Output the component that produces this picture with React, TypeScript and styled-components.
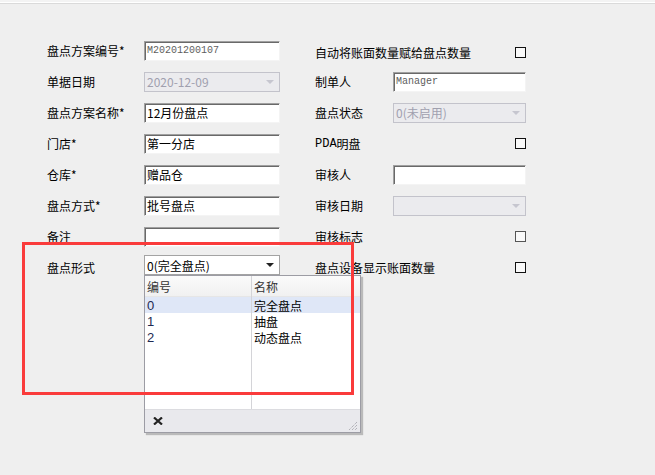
import styled, { createGlobalStyle } from "styled-components";

const GlobalStyle = createGlobalStyle`
  html, body {
    margin: 0;
    padding: 0;
    background: #efefef;
    height: 475px;
    overflow: hidden;
  }
  body {
    font-family: "Noto Sans CJK SC", "DejaVu Sans", sans-serif;
    font-size: 12px;
    color: #000;
  }
`;

const Page = styled.div`
  position: relative;
  width: 655px;
  height: 475px;
  border-top: 2px solid #f3f3f3;
  box-sizing: border-box;
`;

const TopEdge = styled.div`
  height: 1px;
  background: #fff;
  border-bottom: 1px solid #dadada;
`;

const Form = styled.div`
  display: flex;
  gap: 35px;
  padding: 31px 0 0 47px;
`;

const Column = styled.div<{ $label: number; $field: number }>`
  display: grid;
  grid-template-columns: ${(p) => p.$label}px ${(p) => p.$field}px;
  grid-auto-rows: 31px;
`;

const Label = styled.div`
  display: flex;
  align-items: center;
  white-space: nowrap;
  line-height: 1;
`;

const Wide = styled.div`
  grid-column: 1 / span 2;
  display: flex;
  align-items: center;
  justify-content: space-between;
  white-space: nowrap;
  padding-top: 3px;
`;

const Field = styled.div<{ $end?: boolean; $top?: boolean }>`
  position: relative;
  display: flex;
  align-items: ${(p) => (p.$top ? "flex-start" : "center")};
  padding-top: ${(p) => (p.$top ? "3px" : "0")};
  justify-content: ${(p) => (p.$end ? "flex-end" : "stretch")};
`;

const TextInput = styled.div<{ $mono?: boolean }>`
  flex: 1;
  height: 20px;
  box-sizing: border-box;
  background: #fff;
  border: 1px solid;
  border-color: #a0a0a0 #f4f4f4 #f4f4f4 #a0a0a0;
  box-shadow: inset 1px 1px 0 #696969;
  padding-left: 2px;
  display: flex;
  align-items: center;
  white-space: nowrap;
  font-family: ${(p) =>
    p.$mono ? '"Liberation Mono", monospace' : '"Noto Sans CJK SC", sans-serif'};
  font-size: ${(p) => (p.$mono ? "10px" : "12px")};
  color: ${(p) => (p.$mono ? "#5e5e5e" : "#000")};
`;

const Select = styled.div<{ $disabled?: boolean }>`
  flex: 1;
  height: 20px;
  box-sizing: border-box;
  border: 1px solid ${(p) => (p.$disabled ? "#c3c3cb" : "#a3a3a3")};
  background: ${(p) => (p.$disabled ? "#ebebee" : "#fff")};
  color: ${(p) => (p.$disabled ? "#a0a0ae" : "#000")};
  display: flex;
  align-items: center;
  justify-content: space-between;
  padding: 0 5px 0 2px;
  font-size: 12px;
  white-space: nowrap;
`;

const Arrow = styled.span<{ $disabled?: boolean }>`
  width: 0;
  height: 0;
  border-left: 4px solid transparent;
  border-right: 4px solid transparent;
  border-top: 4px solid ${(p) => (p.$disabled ? "#c6c6cf" : "#222")};
`;

const Check = styled.span<{ $light?: boolean }>`
  width: 11px;
  height: 11px;
  box-sizing: border-box;
  border: 1px solid ${(p) => (p.$light ? "#555" : "#111")};
  background: #f9f9f9;
`;

const Popup = styled.div`
  position: absolute;
  left: 0;
  top: 23px;
  width: 217px;
  height: 158px;
  box-sizing: border-box;
  background: #fff;
  border: 1px solid #9c9ca4;
  box-shadow: 2px 2px 1px rgba(0, 0, 0, 0.22);
  display: flex;
  flex-direction: column;
  z-index: 2;
`;

const ListBody = styled.div`
  flex: 1;
  display: grid;
  grid-template-columns: 107px 1fr;
`;

const ListColumn = styled.div<{ $divider?: boolean }>`
  display: flex;
  flex-direction: column;
  border-right: ${(p) => (p.$divider ? "1px solid #d4d4d8" : "none")};
`;

const HeaderCell = styled.div`
  height: 20px;
  border-bottom: 1px solid #e6e6e6;
  background: linear-gradient(#fbfbfb, #f1f1f1);
  display: flex;
  align-items: center;
  padding-left: 2px;
  color: #333;
`;

const Cell = styled.div<{ $selected?: boolean; $code?: boolean }>`
  height: 16px;
  display: flex;
  align-items: center;
  padding-left: 2px;
  background: ${(p) => (p.$selected ? "#dfe7f7" : "transparent")};
  color: ${(p) => (p.$code ? "#1e2a52" : "#000")};
  font-family: ${(p) =>
    p.$code ? '"Liberation Sans", sans-serif' : '"Noto Sans CJK SC", sans-serif'};
  font-size: ${(p) => (p.$code ? "13px" : "12px")};
`;

const Footer = styled.div`
  height: 22px;
  background: #e9e9ed;
  border-top: 1px solid #dcdce0;
  display: flex;
  align-items: center;
  justify-content: space-between;
  padding: 0 2px 0 8px;
`;

const Grip = styled.svg`
  align-self: flex-end;
  margin-bottom: 1px;
`;

const Annotation = styled.div`
  position: absolute;
  left: 22px;
  top: 240px;
  width: 332px;
  height: 153px;
  box-sizing: border-box;
  border: 3px solid #fa3b3b;
  z-index: 3;
  pointer-events: none;
`;

const Mono = styled.span`
  font-family: "Liberation Mono", monospace;
  font-size: 12px;
`;

const options = [
  { code: "0", name: "完全盘点" },
  { code: "1", name: "抽盘" },
  { code: "2", name: "动态盘点" },
];

export default function App() {
  return (
    <>
      <GlobalStyle />
      <Page>
        <TopEdge />
        <Form>
          <Column $label={97} $field={136}>
            <Label>盘点方案编号*</Label>
            <Field>
              <TextInput $mono>M20201200107</TextInput>
            </Field>
            <Label>单据日期</Label>
            <Field>
              <Select $disabled>
                2020-12-09
                <Arrow $disabled />
              </Select>
            </Field>
            <Label>盘点方案名称*</Label>
            <Field>
              <TextInput>12月份盘点</TextInput>
            </Field>
            <Label>门店*</Label>
            <Field>
              <TextInput>第一分店</TextInput>
            </Field>
            <Label>仓库*</Label>
            <Field>
              <TextInput>赠品仓</TextInput>
            </Field>
            <Label>盘点方式*</Label>
            <Field>
              <TextInput>批号盘点</TextInput>
            </Field>
            <Label>备注</Label>
            <Field>
              <TextInput />
            </Field>
            <Label>盘点形式</Label>
            <Field $top>
              <Select>
                0(完全盘点)
                <Arrow />
              </Select>
              <Popup>
                <ListBody>
                  <ListColumn $divider>
                    <HeaderCell>编号</HeaderCell>
                    {options.map((o, i) => (
                      <Cell key={o.code} $code $selected={i === 0}>
                        {o.code}
                      </Cell>
                    ))}
                  </ListColumn>
                  <ListColumn>
                    <HeaderCell>名称</HeaderCell>
                    {options.map((o, i) => (
                      <Cell key={o.code} $selected={i === 0}>
                        {o.name}
                      </Cell>
                    ))}
                  </ListColumn>
                </ListBody>
                <Footer>
                  <svg width="10" height="8" viewBox="0 0 10 8">
                    <path d="M1 0.5 L9 7.5 M9 0.5 L1 7.5" stroke="#222" strokeWidth="2.2" />
                  </svg>
                  <Grip width="11" height="11" viewBox="0 0 11 11">
                    <path
                      d="M10 2 L2 10 M10 5 L5 10 M10 8 L8 10"
                      stroke="#9a9aa2"
                      strokeWidth="1"
                      strokeDasharray="1 1"
                    />
                  </Grip>
                </Footer>
              </Popup>
            </Field>
          </Column>
          <Column $label={78} $field={133}>
            <Wide>
              自动将账面数量赋给盘点数量
              <Check />
            </Wide>
            <Label>制单人</Label>
            <Field>
              <TextInput $mono>Manager</TextInput>
            </Field>
            <Label>盘点状态</Label>
            <Field>
              <Select $disabled>
                0(未启用)
                <Arrow $disabled />
              </Select>
            </Field>
            <Label>
              <Mono>PDA</Mono>明盘
            </Label>
            <Field $end>
              <Check />
            </Field>
            <Label>审核人</Label>
            <Field>
              <TextInput />
            </Field>
            <Label>审核日期</Label>
            <Field>
              <Select $disabled>
                <span />
                <Arrow $disabled />
              </Select>
            </Field>
            <Label>审核标志</Label>
            <Field $end>
              <Check $light />
            </Field>
            <Label>盘点设备显示账面数量</Label>
            <Field $end>
              <Check />
            </Field>
          </Column>
        </Form>
        <Annotation />
      </Page>
    </>
  );
}
